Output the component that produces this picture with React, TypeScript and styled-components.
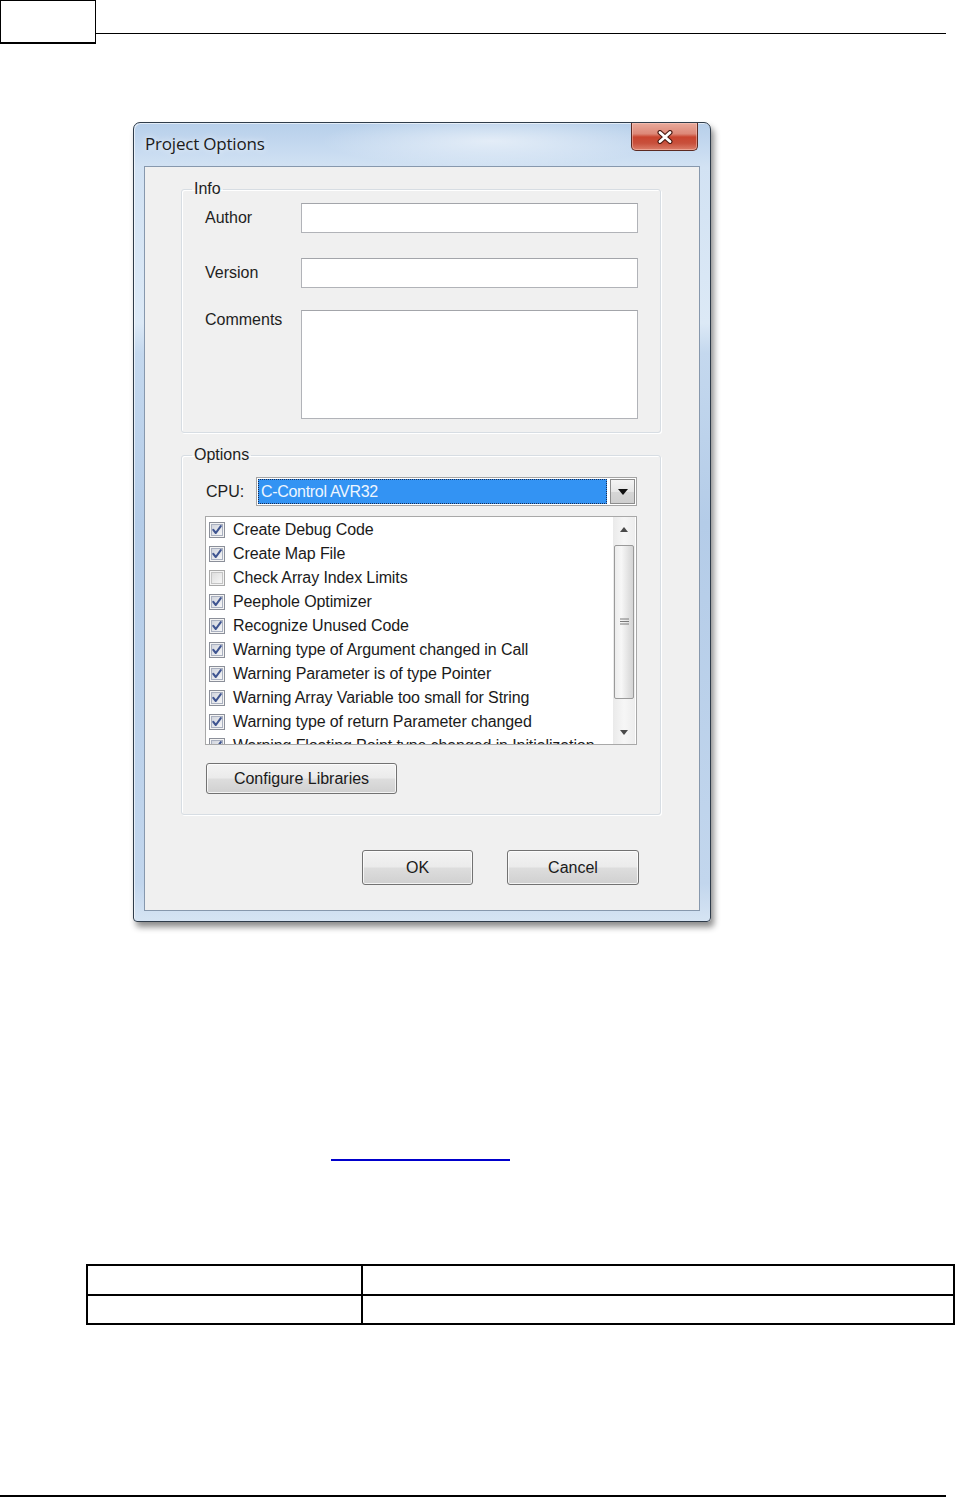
import React from "react";
import styled, { createGlobalStyle } from "styled-components";

const Global = createGlobalStyle`
  html, body { margin: 0; padding: 0; background: #ffffff; }
  body { font-family: "Liberation Sans", Arial, sans-serif; }
  *, *::before, *::after { box-sizing: border-box; }
`;

const Page = styled.div`
  width: 967px;
  height: 1497px;
  display: flex;
  flex-direction: column;
  overflow: hidden;
  background: #fff;
`;

const Header = styled.header`
  display: flex;
  align-items: flex-start;
  height: 44px;
  margin-right: 21px;
`;

const PageNumBox = styled.div`
  width: 96px;
  height: 44px;
  border: 1px solid #000;
  border-bottom-width: 2px;
`;

const HeaderRule = styled.div`
  flex: 1;
  height: 34px;
  border-bottom: 1px solid #000;
`;

const Figure = styled.div`
  margin: 78px 0 0 133px;
`;

const Window = styled.div`
  width: 578px;
  height: 800px;
  border: 1px solid #2f3c4a;
  border-radius: 7px 7px 4px 4px;
  background:
    radial-gradient(ellipse 170px 26px at 62% 18px, rgba(255, 255, 255, 0.55), rgba(255, 255, 255, 0)),
    linear-gradient(180deg, #b7cfea 0px, #c9dcf1 30px, #d2e2f3 44px, #dce9f6 200px, #c4d8ee 230px, #b4cce8 400px, #c2d6ed 760px, #d6e4f3 100%);
  box-shadow: 3px 5px 6px rgba(0, 0, 0, 0.45), 1px 1px 0 rgba(255, 255, 255, 0.6) inset;
  display: flex;
  flex-direction: column;
`;

const TitleBar = styled.div`
  height: 43px;
  display: flex;
  align-items: center;
`;

const Title = styled.span`
  padding: 0 0 3px 11px;
  font-family: "Open Sans", "Noto Sans", sans-serif;
  font-size: 17px;
  color: #1b1b1b;
  text-shadow: 0 0 6px rgba(255, 255, 255, 0.9);
  letter-spacing: -0.2px;
`;

const CloseButton = styled.div`
  margin-left: auto;
  margin-right: 12px;
  align-self: flex-start;
  width: 67px;
  height: 28px;
  border: 1px solid #5c2a22;
  border-top: none;
  border-radius: 0 0 5px 5px;
  background: linear-gradient(180deg, #e9aa9c 0%, #dd8877 40%, #c9452f 52%, #c8503c 75%, #dc7f6b 100%);
  box-shadow: inset 0 0 0 1px rgba(255, 210, 200, 0.45);
  display: flex;
  align-items: center;
  justify-content: center;
`;

const Client = styled.div`
  flex: 1;
  margin: 0 10px 10px;
  border: 1px solid #8798ad;
  background: #f0f0f0;
  display: flex;
  flex-direction: column;
  color: #1e1e1e;
  font-size: 16px;
`;

const Group = styled.fieldset<{ $mt: number }>`
  margin: ${(p) => p.$mt}px 0 0 36px;
  width: 480px;
  padding: 0;
  border: 1px solid #d7dde3;
  border-radius: 3px;
  box-shadow: inset 1px 1px 0 #ffffff, 1px 1px 0 #ffffff;
  min-width: 0;
`;

const Legend = styled.legend`
  margin-left: 10px;
  padding: 0 2px;
  font-size: 16px;
  line-height: 18px;
  color: #1e1e1e;
`;

const InfoBody = styled.div`
  padding: 5px 23px 13px;
`;

const FieldRow = styled.div<{ $mt: number; $top?: boolean }>`
  display: grid;
  grid-template-columns: 96px 337px;
  align-items: ${(p) => (p.$top ? "start" : "center")};
  margin-top: ${(p) => p.$mt}px;
`;

const FieldLabel = styled.span<{ $pt?: number }>`
  padding-top: ${(p) => p.$pt ?? 0}px;
  font-size: 16px;
  color: #1e1e1e;
`;

const TextBox = styled.div<{ $h: number }>`
  height: ${(p) => p.$h}px;
  background: #fff;
  border: 1px solid #b1b3b8;
  border-top-color: #a3a5aa;
`;

const OptionsBody = styled.div`
  padding: 13px 23px 20px;
`;

const CpuRow = styled.div`
  display: flex;
  align-items: center;
  height: 29px;
`;

const CpuLabel = styled.span`
  width: 51px;
  padding-left: 1px;
  font-size: 16px;
`;

const Combo = styled.div`
  width: 382px;
  height: 29px;
  border: 1px solid #a4a4a4;
  background: #fff;
  display: flex;
  padding: 1px;
  gap: 3px;
`;

const ComboValue = styled.div`
  flex: 1;
  background: #3393f3;
  border: 1px dotted #1a2a50;
  color: #eef6ff;
  font-size: 16px;
  line-height: 23px;
  padding-left: 2px;
  letter-spacing: -0.3px;
`;

const ComboButton = styled.div`
  width: 25px;
  border: 1px solid #8c8c8c;
  background: linear-gradient(180deg, #f4f4f4 0%, #e6e6e6 50%, #d6d6d6 51%, #cfcfcf 100%);
  display: flex;
  align-items: center;
  justify-content: center;
`;

const List = styled.div`
  margin-top: 10px;
  height: 229px;
  border: 1px solid #a8a8a8;
  background: #fff;
  display: flex;
  overflow: hidden;
`;

const Items = styled.div`
  flex: 1;
  padding: 1px 0 0 3px;
  display: flex;
  flex-direction: column;
  overflow: hidden;
`;

const Item = styled.div`
  height: 24px;
  flex-shrink: 0;
  display: flex;
  align-items: center;
  gap: 8px;
  font-size: 16px;
  color: #1a1a1a;
  white-space: nowrap;
  letter-spacing: -0.1px;
`;

const ScrollBar = styled.div`
  width: 22px;
  margin-right: 1px;
  background: linear-gradient(90deg, #eaeaea, #f6f6f6 50%, #ededed);
  display: flex;
  flex-direction: column;
`;

const ScrollArrow = styled.div`
  height: 24px;
  display: flex;
  align-items: center;
  justify-content: center;
`;

const Thumb = styled.div`
  margin: 4px 1px 0;
  height: 154px;
  border: 1px solid #9a9a9a;
  border-radius: 2px;
  background: linear-gradient(90deg, #ececec 0%, #f7f7f7 35%, #e4e4e4 70%, #d4d4d4 100%);
  display: flex;
  align-items: center;
  justify-content: center;
`;

const Spacer = styled.div`
  flex: 1;
`;

const Button = styled.div<{ $w: number; $h: number }>`
  width: ${(p) => p.$w}px;
  height: ${(p) => p.$h}px;
  border: 1px solid #727272;
  border-radius: 3px;
  background: linear-gradient(180deg, #f3f3f3 0%, #ebebeb 48%, #dddddd 52%, #d0d0d0 100%);
  box-shadow: inset 0 0 0 1px rgba(255, 255, 255, 0.75);
  display: flex;
  align-items: center;
  justify-content: center;
  font-size: 16px;
  color: #1a1a1a;
`;

const ConfigureWrap = styled.div`
  margin-top: 18px;
  padding-left: 1px;
`;

const ButtonRow = styled.div`
  margin-top: 35px;
  padding-right: 60px;
  display: flex;
  justify-content: flex-end;
  gap: 34px;
`;

const LinkRule = styled.div`
  margin: 237px 0 0 331px;
  width: 179px;
  height: 2px;
  background: #0000cc;
`;

const Table = styled.table`
  margin: 103px 0 0 86px;
  width: 869px;
  border-collapse: collapse;
  border: 2px solid #000;
`;

const Cell = styled.td<{ $w?: number; $h: number }>`
  border: 2px solid #000;
  width: ${(p) => (p.$w ? `${p.$w}px` : "auto")};
  height: ${(p) => p.$h}px;
  padding: 0;
`;

const Footer = styled.div`
  margin-top: auto;
  width: 946px;
  height: 2px;
  background: #000;
`;

const CheckBox: React.FC<{ checked: boolean }> = ({ checked }) => (
  <svg width="16" height="16" viewBox="0 0 16 16" style={{ flexShrink: 0 }}>
    <defs>
      <linearGradient id={checked ? "cbOn" : "cbOff"} x1="0" y1="0" x2="1" y2="1">
        <stop offset="0" stopColor={checked ? "#cfd3dc" : "#dcdcdc"} />
        <stop offset="1" stopColor="#f8f8f8" />
      </linearGradient>
    </defs>
    <rect x="0.5" y="0.5" width="15" height="15" fill="#f4f4f4" stroke={checked ? "#8b8f99" : "#a8a8a8"} />
    <rect x="2.5" y="2.5" width="11" height="11" fill={`url(#${checked ? "cbOn" : "cbOff"})`} stroke={checked ? "#a9b0c0" : "#c4c4c4"} />
    {checked && (
      <path d="M4.3 7.8 L6.8 11 L11.8 4.2" fill="none" stroke="#3f5591" strokeWidth="2.1" strokeLinecap="round" strokeLinejoin="round" />
    )}
  </svg>
);

const items: { label: string; checked: boolean }[] = [
  { label: "Create Debug Code", checked: true },
  { label: "Create Map File", checked: true },
  { label: "Check Array Index Limits", checked: false },
  { label: "Peephole Optimizer", checked: true },
  { label: "Recognize Unused Code", checked: true },
  { label: "Warning type of Argument changed in Call", checked: true },
  { label: "Warning Parameter is of type Pointer", checked: true },
  { label: "Warning Array Variable too small for String", checked: true },
  { label: "Warning type of return Parameter changed", checked: true },
  { label: "Warning Floating Point type changed in Initialization", checked: true },
];

export default function App() {
  return (
    <Page>
      <Global />
      <Header>
        <PageNumBox />
        <HeaderRule />
      </Header>

      <Figure>
        <Window>
          <TitleBar>
            <Title>Project Options</Title>
            <CloseButton>
              <svg width="20" height="14" viewBox="0 0 20 14">
                <path d="M5 2.5 L15 11.5 M15 2.5 L5 11.5" stroke="#4a1a12" strokeWidth="5" strokeLinecap="round" />
                <path d="M5 2.5 L15 11.5 M15 2.5 L5 11.5" stroke="#ffffff" strokeWidth="2.8" strokeLinecap="round" />
              </svg>
            </CloseButton>
          </TitleBar>

          <Client>
            <Group $mt={13}>
              <Legend>Info</Legend>
              <InfoBody>
                <FieldRow $mt={0}>
                  <FieldLabel>Author</FieldLabel>
                  <TextBox $h={30} />
                </FieldRow>
                <FieldRow $mt={25}>
                  <FieldLabel>Version</FieldLabel>
                  <TextBox $h={30} />
                </FieldRow>
                <FieldRow $mt={22} $top>
                  <FieldLabel $pt={1}>Comments</FieldLabel>
                  <TextBox $h={109} />
                </FieldRow>
              </InfoBody>
            </Group>

            <Group $mt={13}>
              <Legend>Options</Legend>
              <OptionsBody>
                <CpuRow>
                  <CpuLabel>CPU:</CpuLabel>
                  <Combo>
                    <ComboValue>C-Control AVR32</ComboValue>
                    <ComboButton>
                      <svg width="10" height="6" viewBox="0 0 10 6">
                        <path d="M0 0 H10 L5 6 Z" fill="#111" />
                      </svg>
                    </ComboButton>
                  </Combo>
                </CpuRow>

                <List>
                  <Items>
                    {items.map((it) => (
                      <Item key={it.label}>
                        <CheckBox checked={it.checked} />
                        {it.label}
                      </Item>
                    ))}
                  </Items>
                  <ScrollBar>
                    <ScrollArrow>
                      <svg width="8" height="5" viewBox="0 0 8 5">
                        <path d="M0 5 L4 0 L8 5 Z" fill="#4a4a4a" />
                      </svg>
                    </ScrollArrow>
                    <Thumb>
                      <svg width="9" height="8" viewBox="0 0 9 8">
                        <path d="M0 1 H9 M0 3.5 H9 M0 6 H9" stroke="#7a7a7a" strokeWidth="1" />
                      </svg>
                    </Thumb>
                    <Spacer />
                    <ScrollArrow>
                      <svg width="8" height="5" viewBox="0 0 8 5">
                        <path d="M0 0 L8 0 L4 5 Z" fill="#4a4a4a" />
                      </svg>
                    </ScrollArrow>
                  </ScrollBar>
                </List>

                <ConfigureWrap>
                  <Button $w={191} $h={31}>Configure Libraries</Button>
                </ConfigureWrap>
              </OptionsBody>
            </Group>

            <ButtonRow>
              <Button $w={111} $h={35}>OK</Button>
              <Button $w={132} $h={35}>Cancel</Button>
            </ButtonRow>
          </Client>
        </Window>
      </Figure>

      <LinkRule />

      <Table>
        <tbody>
          <tr>
            <Cell $w={275} $h={30} />
            <Cell $h={30} />
          </tr>
          <tr>
            <Cell $w={275} $h={29} />
            <Cell $h={29} />
          </tr>
        </tbody>
      </Table>

      <Footer />
    </Page>
  );
}
